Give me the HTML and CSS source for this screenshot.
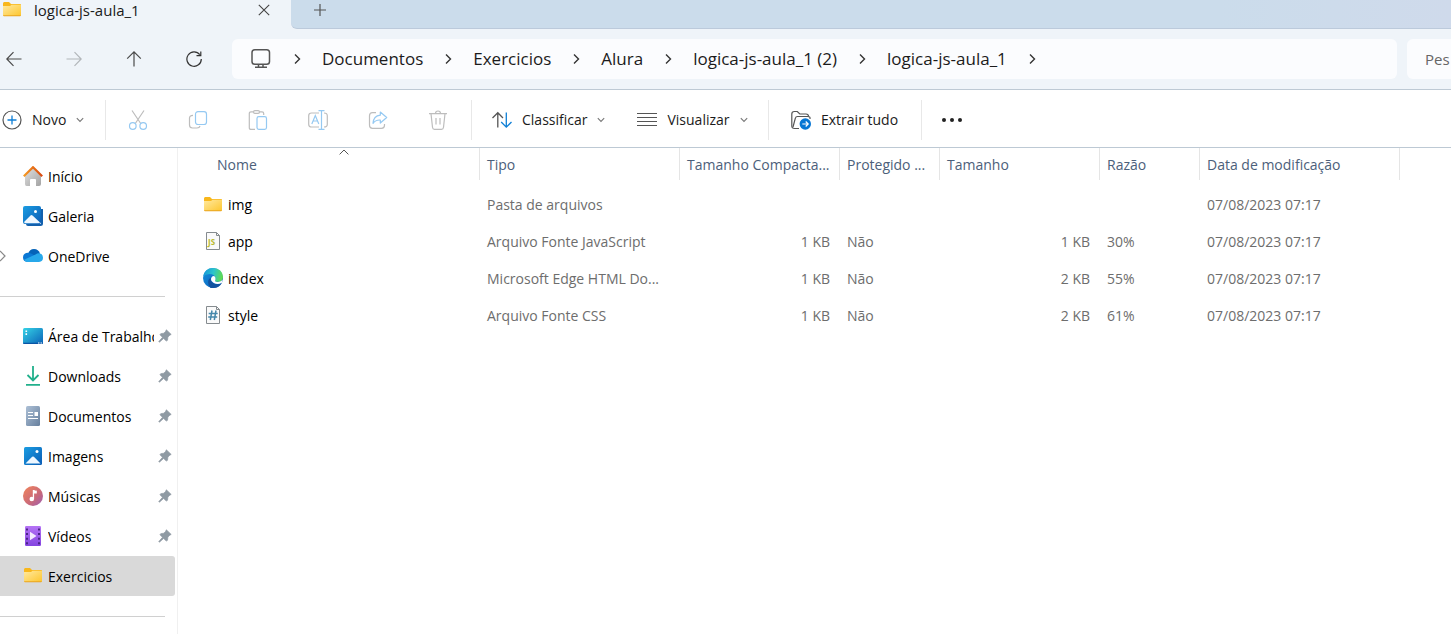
FILE: index.html
```html
<!DOCTYPE html>
<html lang="pt-BR">
<head>
<meta charset="utf-8">
<title>logica-js-aula_1</title>
<link rel="stylesheet" href="styles.css">
</head>
<body>
<svg class="defs" aria-hidden="true">
  <defs>
    <linearGradient id="gFolder" x1="0" y1="0" x2="1" y2="1"><stop offset="0" stop-color="#ffe9a0"/><stop offset="1" stop-color="#fdc62e"/></linearGradient>
    <linearGradient id="gRoof" x1="0" y1="0" x2="1" y2="0"><stop offset="0" stop-color="#f59a23"/><stop offset="1" stop-color="#d9480f"/></linearGradient>
    <linearGradient id="gWall" x1="0" y1="0" x2="1" y2="1"><stop offset="0" stop-color="#e0e0e0"/><stop offset="1" stop-color="#a3a3a3"/></linearGradient>
    <linearGradient id="gPhoto" x1="0" y1="0" x2="1" y2="1"><stop offset="0" stop-color="#1b9de2"/><stop offset="1" stop-color="#0a5cb5"/></linearGradient>
    <linearGradient id="gDesk" x1="0" y1="0" x2="1" y2="1"><stop offset="0" stop-color="#35d3e6"/><stop offset="1" stop-color="#0b62b8"/></linearGradient>
    <linearGradient id="gDoc" x1="0" y1="0" x2="1" y2="1"><stop offset="0" stop-color="#adc0d6"/><stop offset="1" stop-color="#667f9d"/></linearGradient>
    <linearGradient id="gMusic" x1="0" y1="0" x2="1" y2="1"><stop offset="0" stop-color="#f2855a"/><stop offset=".6" stop-color="#c9697a"/><stop offset="1" stop-color="#9c5fb5"/></linearGradient>
    <linearGradient id="gVideo" x1="0" y1="0" x2="0" y2="1"><stop offset="0" stop-color="#b573f5"/><stop offset="1" stop-color="#8445e0"/></linearGradient>
    <linearGradient id="gEdgeTop" x1="0" y1=".3" x2="1" y2=".5"><stop offset="0" stop-color="#1797d8"/><stop offset=".5" stop-color="#2cc4cc"/><stop offset="1" stop-color="#62dd4c"/></linearGradient>
    <linearGradient id="gEdgeLow" x1="0" y1="0" x2="1" y2="1"><stop offset="0" stop-color="#1590dc"/><stop offset="1" stop-color="#0a5cb8"/></linearGradient>
    <symbol id="folder" viewBox="0 0 20 20"><path d="M1 3.500Q1 2 2.200 2H7l2 2h9.200q.8 0 .8.8V8H1z" fill="#f8b71c"/><path d="M1 6h7l1.500-1.200H19V15q0 1-1 1H2q-1 0-1-1z" fill="url(#gFolder)"/><path d="M1 15.300h18q-.2.900-1 .900H2q-.8 0-1-.900z" fill="#e9a520"/></symbol>
    <symbol id="pin" viewBox="0 0 14 14"><path d="M8.300.8 13.200 5.400 11.800 6.200 9.900 8.100 9.500 11.300 8.300 12 5.600 9.400 1.400 13.200.8 12.600 4.500 8.300 2 5.800 2.700 4.700 5.900 4.200 7.700 2.300z" fill="#8f9aa3" stroke="#8f9aa3" stroke-width=".7" stroke-linejoin="round"/></symbol>
    <symbol id="chev" viewBox="0 0 8 12"><path d="m2 1.500 4.500 4.500L2 10.500" fill="none" stroke="#333" stroke-width="1.400"/></symbol>
    <symbol id="down" viewBox="0 0 8 6"><path d="m.8 1.200 3.200 3.200L7.200 1.200" fill="none" stroke="#777" stroke-width="1.100"/></symbol>
  </defs>
</svg>

<header class="titlebar">
  <div class="tab">
    <svg class="ico" aria-hidden="true"><use href="#folder"/></svg>
    <span class="tab-title">logica-js-aula_1</span>
    <button class="plain tab-close" aria-label="Fechar guia"><svg width="12" height="12" viewBox="0 0 12 12"><path d="m.8.8 10.400 10.400M11.200.8.8 11.200" stroke="#444" stroke-width="1.100"/></svg></button>
  </div>
  <div class="tab-rest">
    <button class="plain" aria-label="Nova guia"><svg width="12" height="12" viewBox="0 0 12 12"><path d="M6 0v12M0 6h12" stroke="#555" stroke-width="1.200"/></svg></button>
  </div>
</header>

<div class="navbar">
  <div class="nav-buttons">
    <button class="plain" aria-label="Voltar"><svg width="16" height="16" viewBox="0 0 16 16" fill="none" stroke="#4a4a4a" stroke-width="1.200"><path d="M15.500 8H1M7.500 1.200.8 8l6.700 6.800"/></svg></button>
    <button class="plain" aria-label="Avançar" disabled><svg width="16" height="16" viewBox="0 0 16 16" fill="none" stroke="#b2b6ba" stroke-width="1.200"><path d="M.5 8H15M8.500 1.200 15.200 8l-6.700 6.800"/></svg></button>
    <button class="plain" aria-label="Acima"><svg width="16" height="16" viewBox="0 0 16 16" fill="none" stroke="#4a4a4a" stroke-width="1.200"><path d="M8 15.500V1M1.200 7.700 8 .9l6.800 6.800"/></svg></button>
    <button class="plain" aria-label="Atualizar"><svg width="16" height="16" viewBox="0 0 16 16" fill="none" stroke="#333" stroke-width="1.200"><path d="M15.300 8A7.200 7.200 0 1 1 13.800 3.700M14.800.5v4.200h-4.300"/></svg></button>
  </div>
  <nav class="address" aria-label="Caminho">
    <svg width="22" height="22" viewBox="0 0 22 22" fill="none" stroke="#555" stroke-width="1.500"><rect x="2" y="1.800" width="17.500" height="14.500" rx="2.800"/><path d="M8.500 16.500v2.500M13 16.500v2.500M5 19.300h12"/></svg>
    <svg class="chev" aria-hidden="true"><use href="#chev"/></svg>
    <a href="#">Documentos</a>
    <svg class="chev" aria-hidden="true"><use href="#chev"/></svg>
    <a href="#">Exercicios</a>
    <svg class="chev" aria-hidden="true"><use href="#chev"/></svg>
    <a href="#">Alura</a>
    <svg class="chev" aria-hidden="true"><use href="#chev"/></svg>
    <a href="#">logica-js-aula_1 (2)</a>
    <svg class="chev" aria-hidden="true"><use href="#chev"/></svg>
    <a href="#">logica-js-aula_1</a>
    <svg class="chev" aria-hidden="true"><use href="#chev"/></svg>
  </nav>
  <input class="search" type="text" aria-label="Pesquisar" placeholder="Pes">
</div>

<div class="toolbar" role="toolbar" aria-label="Comandos">
  <div class="group group-new">
    <button class="plain cmd"><svg width="20" height="20" viewBox="0 0 20 20" fill="none"><circle cx="10" cy="10" r="9" stroke="#555" stroke-width="1.200"/><path d="M10 5.500v9M5.500 10h9" stroke="#0f7fd6" stroke-width="1.300"/></svg><span>Novo</span><svg class="down" aria-hidden="true"><use href="#down"/></svg></button>
  </div>
  <div class="group group-edit">
    <button class="plain" aria-label="Recortar" disabled><svg width="20" height="20" viewBox="0 0 20 20" fill="none" stroke-width="1.200"><path d="M4 .5 12.700 13.500M16 .5 7.300 13.500" stroke="#bdbdbd"/><circle cx="4.800" cy="16" r="3.300" stroke="#95c9f2"/><circle cx="15.200" cy="16" r="3.300" stroke="#95c9f2"/></svg></button>
    <button class="plain" aria-label="Copiar" disabled><svg width="20" height="20" viewBox="0 0 20 20" fill="none" stroke-width="1.200"><path d="M5 5.300Q1.500 5.500 1.500 8v7q0 3 3 3H9q2.500 0 3-2" stroke="#bdbdbd"/><rect x="7.500" y="1.700" width="11" height="12.800" rx="2.500" stroke="#95c9f2"/></svg></button>
    <button class="plain" aria-label="Colar" disabled><svg width="20" height="20" viewBox="0 0 20 20" fill="none" stroke-width="1.200"><path d="M7 19.400H3q-1.700 0-1.700-1.700V3.500Q1.300 1.800 3 1.800h2.300M11.700 1.800H14q1.700 0 1.700 1.700V5" stroke="#bdbdbd"/><rect x="5.500" y=".6" width="6" height="2.800" rx="1.400" stroke="#bdbdbd"/><rect x="9" y="6.600" width="9.500" height="12.800" rx="1.800" stroke="#95c9f2"/></svg></button>
    <button class="plain" aria-label="Renomear" disabled><svg width="20" height="20" viewBox="0 0 20 20" fill="none" stroke-width="1.200"><path d="M11 3H3.500Q.7 3 .7 5.800v8.400Q.7 17 3.500 17H11M16 3q3.300 0 3.300 2.800v8.400Q19.300 17 16 17" stroke="#bdbdbd"/><path d="M3.800 14 7.300 5.500 10.800 14M5 11h4.700M13.500.7v18.600M10.500.7h6M10.500 19.300h6" stroke="#95c9f2"/></svg></button>
    <button class="plain" aria-label="Compartilhar" disabled><svg width="20" height="20" viewBox="0 0 20 20" fill="none" stroke-width="1.200"><path d="M8 2.700H4.500Q1.500 2.700 1.500 5.700v9.600q0 3 3 3h9q3 0 3-3V14" stroke="#bdbdbd"/><path d="M12.300 2 18.700 7.500 12.300 13V10Q7.500 9.700 5 13.300 5.500 6 12.300 5.200z" stroke="#95c9f2" stroke-linejoin="round"/></svg></button>
    <button class="plain" aria-label="Excluir" disabled><svg width="20" height="20" viewBox="0 0 20 20" fill="none" stroke="#bdbdbd" stroke-width="1.200"><path d="M1 3.700h18M3 3.700l1.500 13.500q.2 2.100 2 2.100h7q1.800 0 2-2.100L17 3.700M7.500 3.500Q7.500 1 10 1t2.500 2.500M8 8v6.500M12 8v6.500"/></svg></button>
  </div>
  <div class="group group-view">
    <button class="plain cmd"><svg width="20" height="20" viewBox="0 0 20 20" fill="none" stroke-width="1.300"><path d="M5.800 17.500V3M.5 8 5.800 2.700 11 8" stroke="#555"/><path d="M14.300 2.500V17M9.200 12l5.100 5.200 5.200-5.200" stroke="#0f7fd6"/></svg><span>Classificar</span><svg class="down" aria-hidden="true"><use href="#down"/></svg></button>
    <button class="plain cmd"><svg width="20" height="20" viewBox="0 0 20 20" stroke="#555" stroke-width="1.200"><path d="M0 3.500h20M0 7.500h20M0 11.500h20M0 15.500h20" shape-rendering="crispEdges"/></svg><span>Visualizar</span><svg class="down" aria-hidden="true"><use href="#down"/></svg></button>
  </div>
  <div class="group group-extract">
    <button class="plain cmd"><svg width="20" height="20" viewBox="0 0 20 20" fill="none" stroke="#555" stroke-width="1.200"><path d="M8 18.500H3.500Q.8 18.500.8 16V4Q.8 1.500 3.300 1.500h3L8.800 4H15q2.500 0 2.500 2.300"/><path d="M2 17 4.300 8.300Q4.800 6.500 6.500 6.500H17q2.500 0 2 2.500"/><circle cx="14.300" cy="14" r="5.700" fill="#0877d4" stroke="none"/><path d="M11.300 14h5.800M14.700 11.500l2.500 2.500-2.500 2.500" stroke="#fff"/></svg><span>Extrair tudo</span></button>
  </div>
  <div class="group group-more">
    <button class="plain" aria-label="Mais opções"><svg width="20" height="4" viewBox="0 0 20 4" fill="#222"><circle cx="2" cy="2" r="2"/><circle cx="10" cy="2" r="2"/><circle cx="18" cy="2" r="2"/></svg></button>
  </div>
</div>

<div class="content">
  <nav class="sidebar" aria-label="Painel de navegação">
    <a class="place" href="#"><svg class="ico" viewBox="0 0 20 20"><path d="M2 9 10 2l8 7v9q0 2-2 2h-3v-6q0-1-1-1H8q-1 0-1 1v6H3.500Q2 20 2 18z" fill="url(#gWall)"/><path d="M.8 10.200 10 1.200l9.200 9" fill="none" stroke="url(#gRoof)" stroke-width="2.200"/></svg><span>Início</span></a>
    <a class="place" href="#"><svg class="ico" viewBox="0 0 20 20"><path d="M3 18h15V3h2v14.500q0 2.500-2.500 2.500H5q-2 0-2-2z" fill="#1260ad"/><rect width="18" height="18" rx="2" fill="url(#gPhoto)"/><path d="m1 16 6.500-6.500q1-1 2 0L17 16.500q-.5.700-1.500.7h-13Q1.500 17.200 1 16z" fill="#eef7ff"/><circle cx="12.500" cy="5.500" r="1.500" fill="#fff"/></svg><span>Galeria</span></a>
    <a class="place" href="#"><svg class="expander" viewBox="0 0 6 12" aria-hidden="true"><path d="m0 1 5 5-5 5" fill="none" stroke="#888" stroke-width="1.200"/></svg><svg class="ico" viewBox="0 0 20 20"><path d="M5 8Q6.500 3 11 3t6 4.500L12 12z" fill="#0563b8"/><path d="M4.500 16Q0 15.500 0 11.500 0 7 5 6.700q2.500 0 4.500 1.500L14 11 8 16z" fill="#0a78d4"/><path d="M4 16q-2-.3-3-2.300L12.500 8.500q1.500-1.200 3.500-1.200 4 .5 4 4.500 0 4-4 4.200z" fill="#28a8ea"/></svg><span>OneDrive</span></a>
    <hr>
    <a class="place pinned" href="#"><svg class="ico" viewBox="0 0 20 20"><rect y="2" width="20" height="16" rx="1.500" fill="url(#gDesk)"/><path d="M2.500 4.500h1.600v1.600H2.500zM2.500 7.300h1.600v1.600H2.500z" fill="#fff"/><path d="M0 16.700h20q0 1.300-1.300 1.300H1.300Q0 18 0 16.700z" fill="#0a55a5"/><path d="M15 17h1.500M17.500 17H19" stroke="#fff"/></svg><span>Área de Trabalho</span><svg class="pin" aria-hidden="true"><use href="#pin"/></svg></a>
    <a class="place pinned" href="#"><svg class="ico" viewBox="0 0 20 20"><path d="M10 0v14M4.500 9l5.500 5.500L15.500 9M3 18.800h14" fill="none" stroke="#22b08c" stroke-width="1.800"/></svg><span>Downloads</span><svg class="pin" aria-hidden="true"><use href="#pin"/></svg></a>
    <a class="place pinned" href="#"><svg class="ico" viewBox="0 0 20 20"><rect x="3" width="14" height="20" rx="1.500" fill="url(#gDoc)"/><path d="M5 6.500h5M5 9.500h5M5 12.500h10" stroke="#fff" stroke-width="1.200"/><path d="M11.500 6h3.500v4h-3.500z" fill="#fff"/></svg><span>Documentos</span><svg class="pin" aria-hidden="true"><use href="#pin"/></svg></a>
    <a class="place pinned" href="#"><svg class="ico" viewBox="0 0 20 20"><rect x="1" y="1" width="18" height="18" rx="1.500" fill="url(#gPhoto)"/><path d="m2.500 17.500 6.600-6.700q.9-.8 1.800 0l6.600 6.700z" fill="#eef7ff"/><circle cx="14" cy="5.500" r="1.500" fill="#fff"/></svg><span>Imagens</span><svg class="pin" aria-hidden="true"><use href="#pin"/></svg></a>
    <a class="place pinned" href="#"><svg class="ico" viewBox="0 0 20 20"><circle cx="10" cy="10" r="10" fill="url(#gMusic)"/><circle cx="8.800" cy="13" r="2.300" fill="#fff"/><path d="M9.800 4v9h1.300V7.500h2.700V4.600q-2 .2-2.500-.6z" fill="#fff"/></svg><span>Músicas</span><svg class="pin" aria-hidden="true"><use href="#pin"/></svg></a>
    <a class="place pinned" href="#"><svg class="ico" viewBox="0 0 20 20"><rect x="2" width="16" height="20" rx="1.200" fill="url(#gVideo)"/><path d="M4 2.500v16M16 2.500v16" stroke="#43207d" stroke-width="1.800" stroke-dasharray="2 2.600"/><path d="m7 5.800 6.500 4.200L7 14.200z" fill="#f4eaff"/></svg><span>Vídeos</span><svg class="pin" aria-hidden="true"><use href="#pin"/></svg></a>
    <a class="place selected" href="#" aria-current="true"><svg class="ico" aria-hidden="true"><use href="#folder"/></svg><span>Exercicios</span></a>
    <hr>
  </nav>

  <main class="files">
    <table>
      <colgroup><col class="c-name"><col class="c-200"><col class="c-160"><col class="c-100"><col class="c-160"><col class="c-100"><col class="c-200"><col></colgroup>
      <thead>
        <tr>
          <th scope="col" aria-sort="ascending">Nome<svg class="sort" viewBox="0 0 10 6" aria-hidden="true"><path d="M.6 5.400 5 1l4.400 4.400" fill="none" stroke="#555"/></svg></th>
          <th scope="col">Tipo</th>
          <th scope="col">Tamanho Compacta...</th>
          <th scope="col">Protegido ...</th>
          <th scope="col">Tamanho</th>
          <th scope="col">Razão</th>
          <th scope="col">Data de modificação</th>
          <td></td>
        </tr>
      </thead>
      <tbody>
        <tr>
          <td><div class="name"><svg class="ico" aria-hidden="true"><use href="#folder"/></svg>img</div></td>
          <td>Pasta de arquivos</td><td></td><td></td><td></td><td></td><td>07/08/2023 07:17</td><td></td>
        </tr>
        <tr>
          <td><div class="name"><svg class="ico" viewBox="0 0 20 20"><path d="M3.500.5h10l3 3v14h-13z" fill="#fafafa" stroke="#858b8f"/><path d="M13.500.5v3h3" fill="none" stroke="#858b8f"/><text x="5" y="13" class="js">JS</text></svg>app</div></td>
          <td>Arquivo Fonte JavaScript</td><td class="num">1 KB</td><td>Não</td><td class="num">1 KB</td><td>30%</td><td>07/08/2023 07:17</td><td></td>
        </tr>
        <tr>
          <td><div class="name"><svg class="ico edge" viewBox="0 1 20 20"><circle cx="10" cy="10" r="10" fill="url(#gEdgeLow)"/><path d="M.2 8.500Q1.500 0 10 0q9.500.3 10 9-.2 4.500-5 4.800-3.300 0-3-1.600.7-1 .5-2.400Q11.500 6 6.500 6 2.500 6 .2 8.500z" fill="url(#gEdgeTop)"/><path d="M7.500 20Q2.500 14 7.700 9.300q-.7 6 6.300 7 2.500.1 5-1.600Q16 20.500 9.500 20z" fill="#1152a0"/><path d="M12.500 10.500q.2 1-.5 1.900 0 1.600 3 1.500 3 0 4.500-1.800.1 1.800-.7 2.600-4 2.600-8 .3-3.500-2.200-2.600-5 1.300-2.700 3.600-1.600.6.700.7 2.100z" fill="#fff"/></svg>index</div></td>
          <td>Microsoft Edge HTML Do...</td><td class="num">1 KB</td><td>Não</td><td class="num">2 KB</td><td>55%</td><td>07/08/2023 07:17</td><td></td>
        </tr>
        <tr>
          <td><div class="name"><svg class="ico" viewBox="0 0 20 20"><path d="M3.500.5h10l3 3v14h-13z" fill="#fafafa" stroke="#858b8f"/><path d="M13.500.5v3h3" fill="none" stroke="#858b8f"/><path d="M9 4.500 7.300 14M13 4.500 11.300 14M5.700 7.500h9M5.200 11h9" stroke="#4688ab" stroke-width="1.500"/></svg>style</div></td>
          <td>Arquivo Fonte CSS</td><td class="num">1 KB</td><td>Não</td><td class="num">2 KB</td><td>61%</td><td>07/08/2023 07:17</td><td></td>
        </tr>
      </tbody>
    </table>
  </main>
</div>
</body>
</html>
```
FILE: styles.css
```css
* { box-sizing: border-box; }

body {
  margin: 0;
  min-height: 100vh;
  display: flex;
  flex-direction: column;
  overflow: hidden;
  background: #fff;
  color: #1b1b1b;
  font: 14px/20px "Open Sans", "Noto Sans", sans-serif;
}

a { color: inherit; text-decoration: none; }
svg { display: block; flex: none; }
.defs { position: absolute; width: 0; height: 0; }
.ico { width: 20px; height: 20px; }
.edge { overflow: visible; }

.plain {
  display: flex;
  align-items: center;
  justify-content: center;
  padding: 0;
  border: 0;
  background: none;
  color: inherit;
  font: inherit;
}

/* Title bar */
.titlebar { display: flex; height: 29px; background: #eff4f9; }
.tab {
  display: flex;
  align-items: center;
  gap: 12px;
  flex: 0 0 291px;
  height: 20px;
  padding: 0 21px 0 2px;
}
.tab-title { flex: 1; font-size: 15px; }
.tab-rest {
  flex: 1;
  display: flex;
  align-items: flex-start;
  padding: 4px 23px;
  border-bottom: 1px solid #bccadb;
  border-bottom-left-radius: 6px;
  background: linear-gradient(90deg, #cbdceb 80%, #cfdaeb);
}

/* Navigation */
.navbar {
  display: flex;
  align-items: center;
  height: 61px;
  border-bottom: 1px solid #bdc9d4;
  background: #eff4f9;
}
.nav-buttons { display: flex; gap: 32px; margin-right: 24px; }
.nav-buttons button { width: 28px; height: 40px; }
.address {
  flex: 1;
  display: flex;
  align-items: center;
  gap: 21px;
  height: 40px;
  padding-left: 18px;
  border-radius: 6px;
  background: #fbfcfe;
  font-size: 17px;
  white-space: nowrap;
}
.chev { width: 8px; height: 12px; }
.search {
  width: 44px;
  height: 40px;
  margin-left: 10px;
  padding: 0 0 0 18px;
  border: 0;
  border-radius: 6px 0 0 6px;
  background: #fbfcfe;
  font: 15px/20px "Open Sans", "Noto Sans", sans-serif;
}
.search::placeholder { color: #666; }

/* Commands */
.toolbar {
  display: flex;
  align-items: center;
  height: 58px;
  padding-top: 2px;
  border-bottom: 1px solid #bdc9d4;
}
.group { display: flex; align-items: center; height: 40px; border-right: 1px solid #e8e8e8; }
.group-new { width: 106px; padding-left: 2px; }
.group-edit { gap: 40px; width: 366px; padding-left: 22px; }
.group-view { gap: 32px; width: 297px; padding-left: 20px; }
.group-extract { width: 153px; padding-left: 22px; }
.group-more { padding-left: 20px; border: 0; }
.cmd { gap: 10px; white-space: nowrap; }
.down { width: 8px; height: 6px; }

/* Content */
.content { flex: 1; display: flex; }
.sidebar {
  flex: 0 0 178px;
  min-width: 0;
  padding-top: 8px;
  border-right: 1px solid #f0f0f0;
  color: #000;
}
.sidebar hr { margin: 20px 12px 19px 0; border: 0; border-top: 1px solid #d0d0d0; }
.place {
  position: relative;
  display: flex;
  align-items: center;
  gap: 5px;
  height: 40px;
  margin-right: 2px;
  padding: 0 3px 0 23px;
  white-space: nowrap;
}
.place span { flex: 1; min-width: 0; padding-top: 1px; overflow: hidden; }
.place.selected { border-radius: 0 3px 3px 0; background: #d9d9d9; }
.pin { width: 14px; height: 14px; }
.pinned { gap: 4px; padding-left: 23px; }
.pinned span { margin-left: 1px; }
.expander { position: absolute; left: 0; width: 6px; height: 12px; }

.files { flex: 1; min-width: 0; }
table { width: 100%; table-layout: fixed; border-collapse: separate; border-spacing: 0; }
.c-name { width: 302px; }
.c-200 { width: 200px; }
.c-160 { width: 160px; }
.c-100 { width: 100px; }
th, td { padding: 0 10px 0 7px; text-align: left; white-space: nowrap; }
th {
  position: relative;
  height: 32px;
  padding-top: 2px;
  padding-right: 0;
  border-right: 1px solid #e5e5e5;
  color: #4c607a;
  font-weight: 400;
}
th:first-child { padding-left: 39px; }
.sort { position: absolute; top: 1px; left: 161px; width: 10px; height: 6px; }
tbody::before { content: ""; display: block; height: 6px; }
tbody td { height: 37px; color: #6d6d6d; }
tbody td:first-child { padding-left: 25px; color: #000; }
tbody .num { text-align: right; }
.name { display: flex; align-items: center; gap: 5px; }
.js { fill: #b7b92f; font: bold 8px "Open Sans", sans-serif; }
```
